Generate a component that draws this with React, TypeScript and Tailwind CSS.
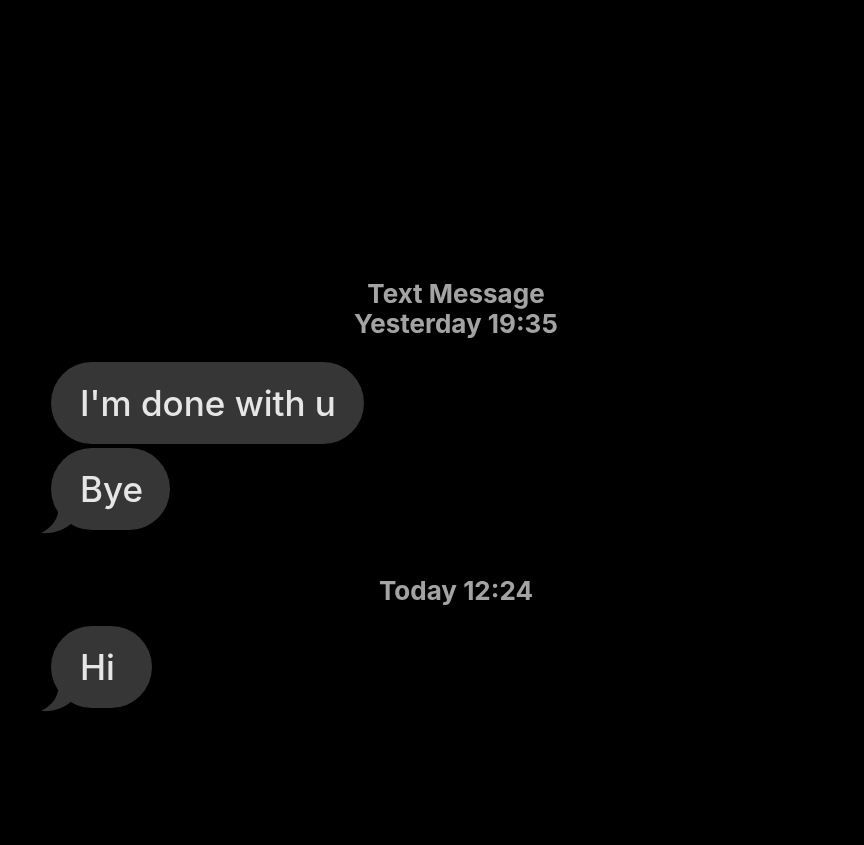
import React from "react";

function Tail() {
  return (
    <svg
      className="absolute left-[-10px] bottom-[-4px]"
      width="34"
      height="30"
      viewBox="0 0 34 30"
    >
      <path d="M18 0 C18 12 14 22 0 29 C12 30 24 26 32 18 L32 0 Z" fill="#363636" />
    </svg>
  );
}

function Bubble({ text, tail, w }: { text: string; tail?: boolean; w: string }) {
  return (
    <div className={`relative flex h-[82px] items-center rounded-[41px] bg-[#363636] pl-[29px] ${w}`}>
      {tail && <Tail />}
      <span className="relative text-[35px] font-medium text-[#e6e6e6]">{text}</span>
    </div>
  );
}

export default function App() {
  return (
    <div
      className="flex h-[845px] w-[864px] flex-col bg-black pt-[279px] blur-[0.6px]"
      style={{ fontFamily: "Inter, 'Liberation Sans', sans-serif" }}
    >
      <div className="flex flex-col items-center pl-[48px] text-[26px] font-bold leading-[30px] text-[#a3a3a3]">
        <span>Text Message</span>
        <span>Yesterday 19:35</span>
      </div>
      <div className="mt-[23px] flex flex-col items-start gap-[4px] pl-[51px]">
        <Bubble text="I'm done with u" w="w-[313px]" />
        <Bubble text="Bye" tail w="w-[119px]" />
      </div>
      <div className="mt-[46px] flex justify-center pl-[48px] text-[26px] font-bold leading-[30px] text-[#a3a3a3]">
        <span>Today 12:24</span>
      </div>
      <div className="mt-[20px] flex flex-col items-start pl-[51px]">
        <Bubble text="Hi" tail w="w-[101px]" />
      </div>
    </div>
  );
}
